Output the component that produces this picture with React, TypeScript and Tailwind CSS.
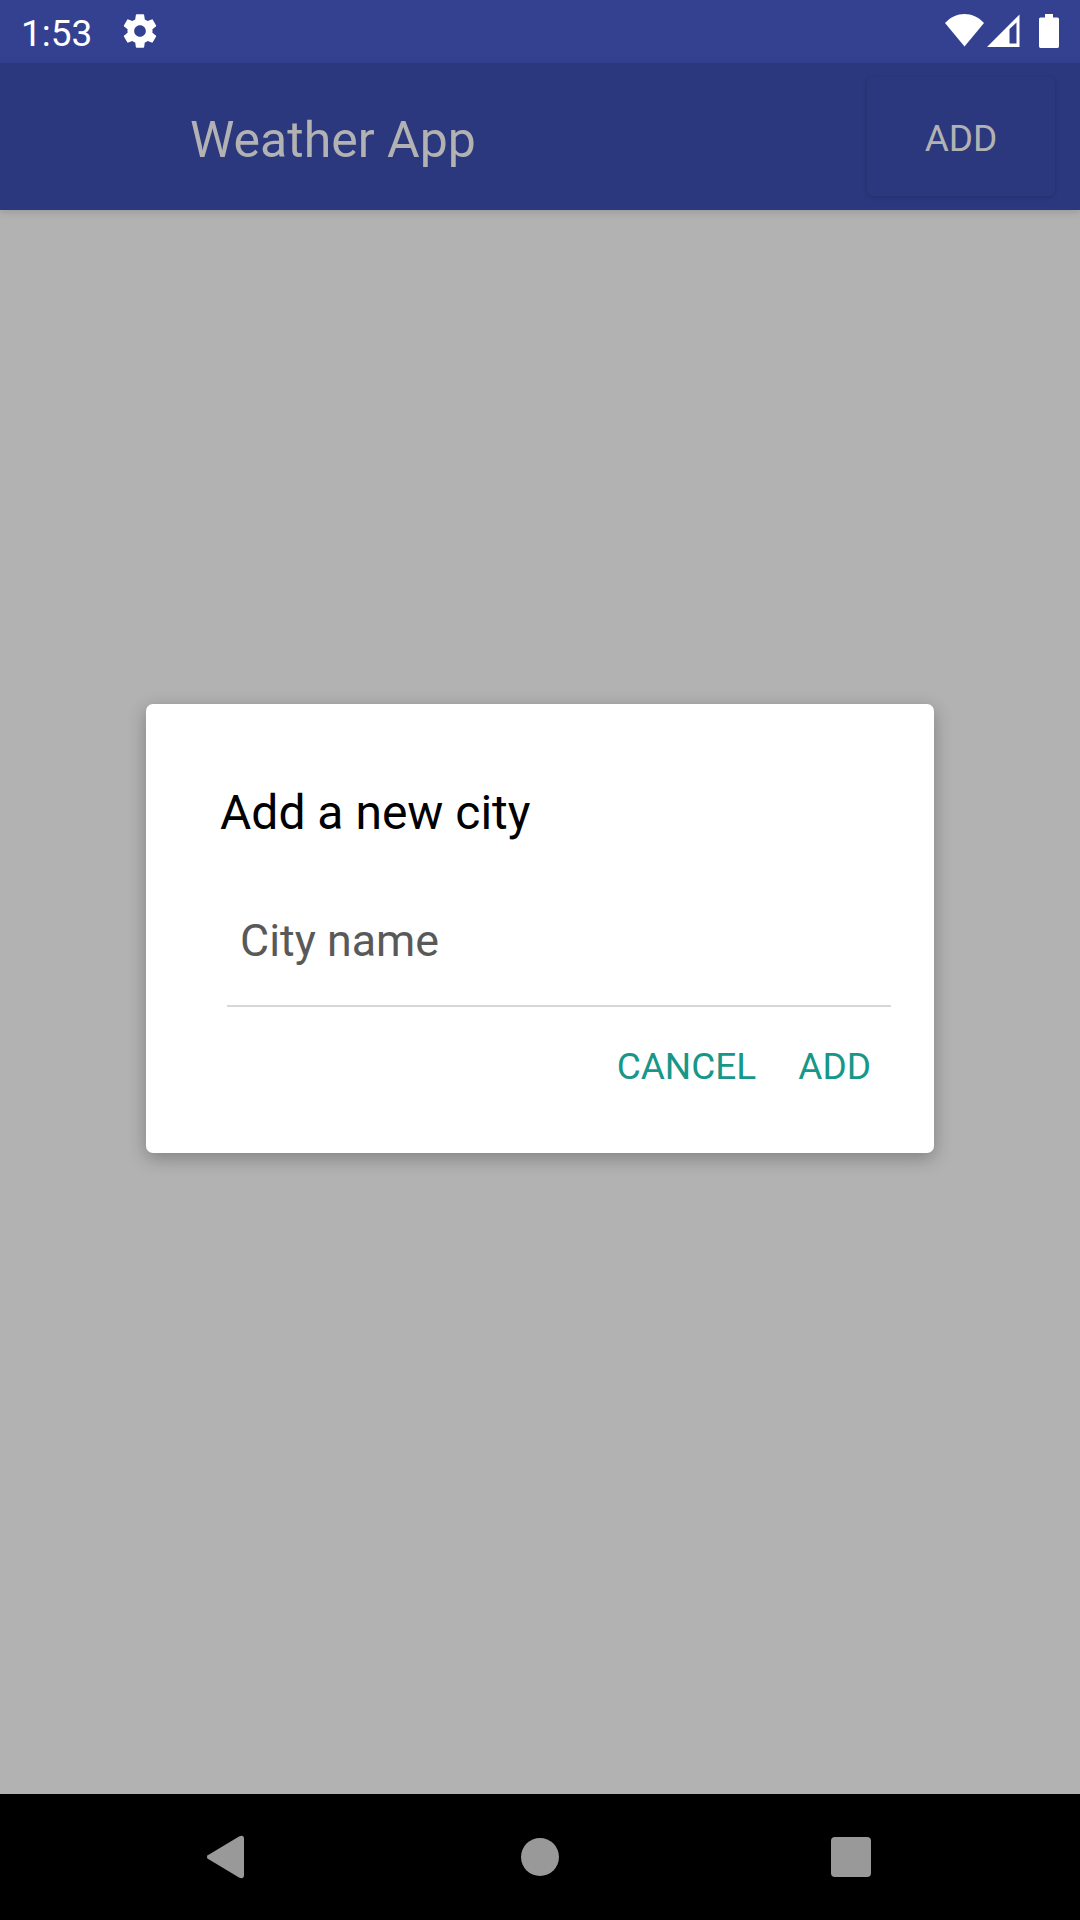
function StatusBar() {
  return (
    <div className="flex h-[63px] items-start justify-between bg-[#344191] pl-[21px] text-white">
      <div className="flex">
        <span className="w-[99px] pt-[9px] text-[37px] leading-[50px]">1:53</span>
        <svg className="mt-[11px] h-[40px] w-[40px]" viewBox="0 0 24 24" fill="currentColor">
          <path d="M19.43 12.98c.04-.32.07-.64.07-.98s-.03-.66-.07-.98l2.11-1.65c.19-.15.24-.42.12-.64l-2-3.46c-.12-.22-.39-.3-.61-.22l-2.49 1c-.52-.4-1.08-.73-1.69-.98l-.38-2.65C14.46 2.18 14.25 2 14 2h-4c-.25 0-.46.18-.49.42l-.38 2.65c-.61.25-1.17.59-1.69.98l-2.49-1c-.23-.09-.49 0-.61.22l-2 3.46c-.13.22-.07.49.12.64l2.11 1.65c-.04.32-.07.65-.07.98s.03.66.07.98l-2.11 1.65c-.19.15-.24.42-.12.64l2 3.46c.12.22.39.3.61.22l2.49-1c.52.4 1.08.73 1.69.98l.38 2.65c.03.24.24.42.49.42h4c.25 0 .46-.18.49-.42l.38-2.65c.61-.25 1.17-.59 1.69-.98l2.49 1c.23.09.49 0 .61-.22l2-3.46c.12-.22.07-.49-.12-.64l-2.11-1.65zM12 15.5c-1.93 0-3.5-1.57-3.5-3.5s1.57-3.5 3.5-3.5 3.5 1.57 3.5 3.5-1.57 3.5-3.5 3.5z" />
        </svg>
      </div>
      <div className="flex pr-[21px] pt-[14px]">
        <svg className="h-[34px] w-[39px]" viewBox="0 0 39 34" fill="currentColor">
          <path d="M0 9C11-3 28-3 39 9L19.5 32.5Z" />
        </svg>
        <svg className="ml-[3px] h-[34px] w-[33px]" viewBox="0 0 33 34" fill="currentColor">
          <path fillRule="evenodd" d="M0 33L32.5 .5V33ZM22.5 15V29.5H29.5V8.5Z" />
        </svg>
        <svg className="ml-[19px] h-[34px] w-[20px]" viewBox="0 0 20 34" fill="currentColor">
          <path d="M6 0H14V3.5H18.5Q20 3.5 20 5V32.3Q20 34 18.5 34H1.5Q0 34 0 32.3V5Q0 3.5 1.5 3.5H6Z" />
        </svg>
      </div>
    </div>
  );
}

function Header() {
  return (
    <header className="relative flex h-[147px] items-start justify-between bg-[#2c387e] pl-[190px] pr-[25px] text-[#b2b2b2] shadow-[0_2px_8px_rgba(0,0,0,0.15)]">
      <h1 className="pt-[45px] text-[50px] leading-[64px]">Weather App</h1>
      <button className="mt-[14px] h-[119px] w-[188px] rounded-[6px] pt-[5px] text-[37px] shadow-[0_1px_5px_rgba(0,0,0,0.18)]">
        ADD
      </button>
    </header>
  );
}

function AddCityDialog() {
  return (
    <section className="h-[449px] w-[788px] rounded-[7px] bg-white pl-[74px] pt-[77px] shadow-[0_5px_18px_rgba(0,0,0,0.28)]">
      <h2 className="text-[48px] leading-[64px] text-black">Add a new city</h2>
      <div className="ml-[7px] h-[162px] w-[664px] border-b-2 border-[#d6d7da] pl-[13px] pt-[66px] text-[44.75px] leading-[60px] text-[#595959]">
        City name
      </div>
      <div className="mr-[63px] mt-[35px] flex justify-end gap-[42px] text-[37px] leading-[50px] text-[#16978a]">
        <button>CANCEL</button>
        <button>ADD</button>
      </div>
    </section>
  );
}

function NavigationBar() {
  return (
    <nav className="flex h-[126px] items-center bg-black pl-[206px] text-[#999999]">
      <svg className="h-[44px] w-[38px]" viewBox="0 0 38 44" fill="currentColor">
        <path d="M1.8 20.2L33 1.4Q38 -.5 38 4V40Q38 44.5 33 42.6L1.8 23.8Q0 22 1.8 20.2Z" />
      </svg>
      <div className="ml-[277px] h-[38px] w-[38px] rounded-full bg-[#999999]" />
      <div className="ml-[272px] h-[40px] w-[40px] rounded-[4px] bg-[#999999]" />
    </nav>
  );
}

export default function App() {
  return (
    <div className="flex h-[1920px] w-[1080px] flex-col overflow-hidden bg-[#b2b2b2] font-['Roboto',sans-serif]">
      <StatusBar />
      <Header />
      <main className="flex flex-1 items-start justify-center pt-[494px]">
        <AddCityDialog />
      </main>
      <NavigationBar />
    </div>
  );
}
